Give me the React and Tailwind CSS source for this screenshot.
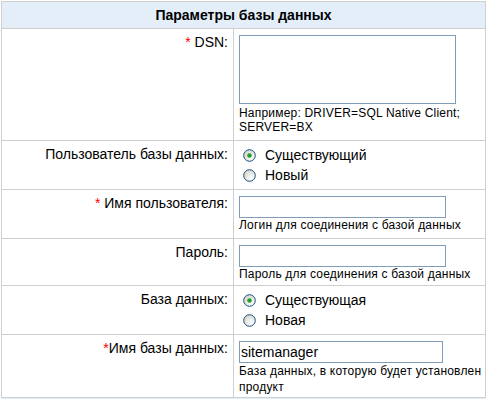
import React from "react";

const font = { fontFamily: '"Liberation Sans", Arial, sans-serif' };

function Radio({ checked }) {
  return (
    <svg width="13" height="13" viewBox="0 0 13 13" className="shrink-0">
      <defs>
        <radialGradient id={checked ? "rgc" : "rgu"} cx="0.65" cy="0.7" r="0.7">
          <stop offset="0" stopColor="#ffffff" />
          <stop offset="1" stopColor="#d6d6ce" />
        </radialGradient>
      </defs>
      <circle cx="6.5" cy="6.5" r="5.8" fill={`url(#${checked ? "rgc" : "rgu"})`} stroke="#1c5180" strokeWidth="1" />
      {checked && <circle cx="6.5" cy="6.5" r="2.3" fill="#21a121" />}
    </svg>
  );
}

function Row({ h, label, children, last }) {
  return (
    <div className={`flex ${h} ${last ? "" : "border-b border-[#cfcfcf]"}`}>
      <div className="w-[232px] shrink-0 border-r border-[#cfcfcf] pt-[5px] pr-[5px] text-right text-[14px] leading-[17px] text-black">
        {label}
      </div>
      <div className="flex-1 pl-[5px] pt-[6px]">{children}</div>
    </div>
  );
}

function Hint({ children, lh = "leading-[14px]" }) {
  return <div className={`text-[12px] tracking-[0.2px] ${lh} text-black`}>{children}</div>;
}

function RadioPair({ a, b }) {
  return (
    <div className="-mt-[2px] flex flex-col text-[14px] leading-[20px] text-black">
      <label className="flex items-center gap-[9px]">
        <span className="ml-[4px] flex">
          <Radio checked />
        </span>
        {a}
      </label>
      <label className="flex items-center gap-[9px]">
        <span className="ml-[4px] flex">
          <Radio />
        </span>
        {b}
      </label>
    </div>
  );
}

const Star = () => <span className="text-[#ff0000]">*</span>;

export default function App() {
  return (
    <div className="bg-white w-[487px] h-[399px] pt-[1px] pl-[1px]" style={font}>
      <div className="w-[485px] border border-[#cfcfcf]">
        <div className="h-[27px] bg-[#e3eef9] border-b border-[#cfcfcf] flex items-center justify-center text-[14px] font-bold text-black">
          Параметры базы данных
        </div>
        <Row h="h-[112px]" label={<><Star /> DSN:</>}>
          <textarea className="block w-[217px] h-[69px] border border-[#7f9db9] bg-white resize-none outline-none" />
          <div className="pt-[2px]">
            <Hint>
              Например: DRIVER=SQL Native Client;
              <br />
              SERVER=BX
            </Hint>
          </div>
        </Row>
        <Row h="h-[49px]" label="Пользователь базы данных:">
          <RadioPair a="Существующий" b="Новый" />
        </Row>
        <Row h="h-[49px]" label={<><Star /> Имя пользователя:</>}>
          <input className="block w-[207px] h-[22px] border border-[#7f9db9] bg-white outline-none" />
          <Hint>Логин для соединения с базой данных</Hint>
        </Row>
        <Row h="h-[47px]" label="Пароль:">
          <input type="password" className="block w-[207px] h-[22px] border border-[#7f9db9] bg-white outline-none" />
          <Hint>Пароль для соединения с базой данных</Hint>
        </Row>
        <Row h="h-[49px]" label="База данных:">
          <RadioPair a="Существующая" b="Новая" />
        </Row>
        <Row h="h-[62px]" last label={<><Star />Имя базы данных:</>}>
          <input
            defaultValue="sitemanager"
            className="block w-[204px] h-[22px] border border-[#7f9db9] bg-white px-[1px] text-[14px] text-black outline-none"
            style={font}
          />
          <Hint lh="leading-[16px]">
            База данных, в которую будет установлен
            <br />
            продукт
          </Hint>
        </Row>
      </div>
      <div className="h-[2px] w-[485px] bg-[#e3eef9]" />
    </div>
  );
}
